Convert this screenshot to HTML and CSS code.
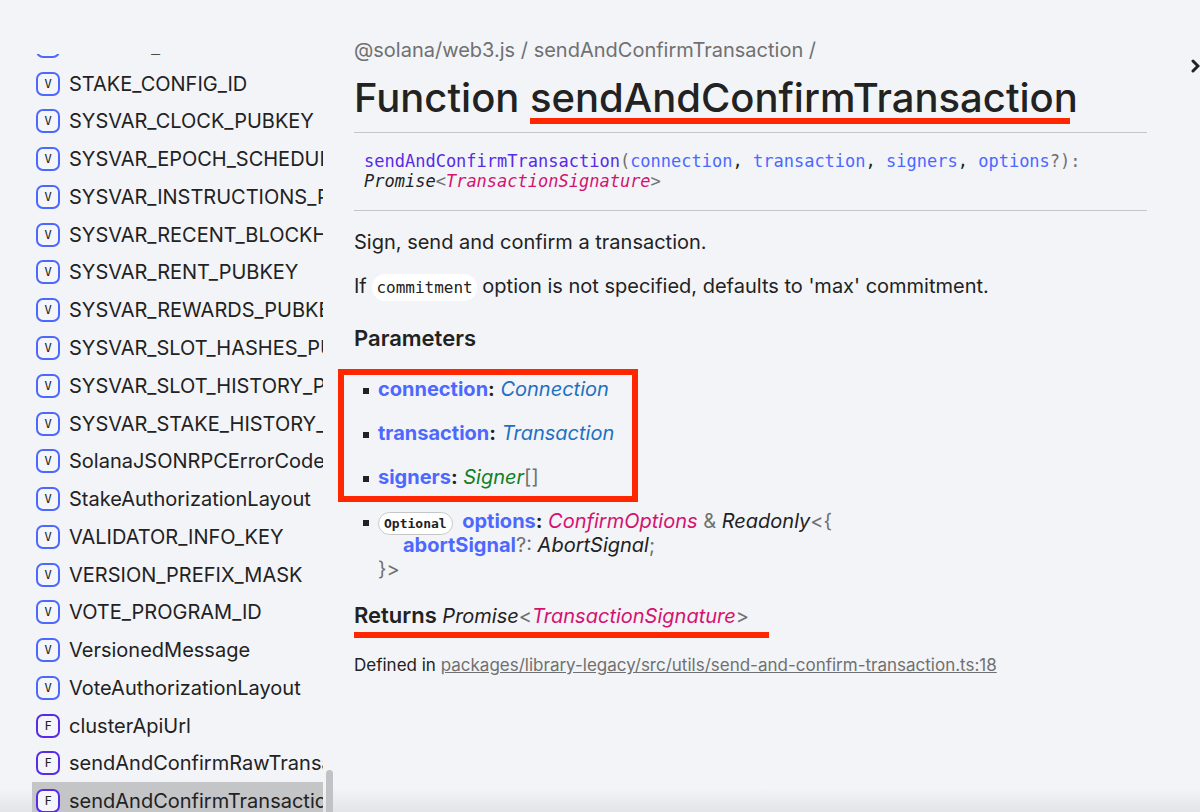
FILE: index.html
```html
<!DOCTYPE html>
<html lang="en">
<head>
    <meta charset="UTF-8">
    <meta name="viewport" content="width=device-width, initial-scale=1.0">
    <title>sendAndConfirmTransaction | @solana/web3.js</title>
    <link rel="stylesheet" href="styles.css">
</head>
<body>

    <div class="container">
        <nav class="site-menu">
            <ul class="nav-list">
                <li><a href="#"><span class="kind">V</span>SOLANA_SCHEMA</a></li>
                <li><a href="#"><span class="kind">V</span>STAKE_CONFIG_ID</a></li>
                <li><a href="#"><span class="kind">V</span>SYSVAR_CLOCK_PUBKEY</a></li>
                <li><a href="#"><span class="kind">V</span>SYSVAR_EPOCH_SCHEDULE_PUBKEY</a></li>
                <li><a href="#"><span class="kind">V</span>SYSVAR_INSTRUCTIONS_PUBKEY</a></li>
                <li><a href="#"><span class="kind">V</span>SYSVAR_RECENT_BLOCKHASHES_PUBKEY</a></li>
                <li><a href="#"><span class="kind">V</span>SYSVAR_RENT_PUBKEY</a></li>
                <li><a href="#"><span class="kind">V</span>SYSVAR_REWARDS_PUBKEY</a></li>
                <li><a href="#"><span class="kind">V</span>SYSVAR_SLOT_HASHES_PUBKEY</a></li>
                <li><a href="#"><span class="kind">V</span>SYSVAR_SLOT_HISTORY_PUBKEY</a></li>
                <li><a href="#"><span class="kind">V</span>SYSVAR_STAKE_HISTORY_PUBKEY</a></li>
                <li><a href="#"><span class="kind">V</span>SolanaJSONRPCErrorCode</a></li>
                <li><a href="#"><span class="kind">V</span>StakeAuthorizationLayout</a></li>
                <li><a href="#"><span class="kind">V</span>VALIDATOR_INFO_KEY</a></li>
                <li><a href="#"><span class="kind">V</span>VERSION_PREFIX_MASK</a></li>
                <li><a href="#"><span class="kind">V</span>VOTE_PROGRAM_ID</a></li>
                <li><a href="#"><span class="kind">V</span>VersionedMessage</a></li>
                <li><a href="#"><span class="kind">V</span>VoteAuthorizationLayout</a></li>
                <li><a href="#"><span class="kind kind-function">F</span>clusterApiUrl</a></li>
                <li><a href="#"><span class="kind kind-function">F</span>sendAndConfirmRawTransaction</a></li>
                <li><a href="#" class="current"><span class="kind kind-function">F</span>sendAndConfirmTransaction</a></li>
            </ul>
            <div class="scroll-thumb"></div>
        </nav>

        <main class="content">
            <div class="breadcrumb"><a href="#">@solana/web3.js</a> / <a href="#">sendAndConfirmTransaction</a> /</div>
            <h1>Function <span class="marked">sendAndConfirmTransaction</span></h1>

            <div class="signature">
                <span class="fn">sendAndConfirmTransaction</span><span class="symbol">(</span><span class="param">connection</span>, <span class="param">transaction</span>, <span class="param">signers</span>, <span class="param">options</span><span class="symbol">?):</span><br>
                <i>Promise</i><span class="symbol">&lt;</span><a href="#" class="type-alias">TransactionSignature</a><span class="symbol">&gt;</span>
            </div>

            <p>Sign, send and confirm a transaction.</p>
            <p>If <code>commitment</code> option is not specified, defaults to 'max' commitment.</p>

            <h4>Parameters</h4>
            <ul class="params boxed">
                <li><b><span class="param">connection</span>:</b> <a href="#" class="type-class">Connection</a></li>
                <li><b><span class="param">transaction</span>:</b> <a href="#" class="type-class">Transaction</a></li>
                <li><b><span class="param">signers</span>:</b> <a href="#" class="type-interface">Signer</a><span class="symbol">[]</span></li>
            </ul>
            <ul class="params">
                <li>
                    <code class="flag">Optional</code> <b><span class="param">options</span>:</b> <a href="#" class="type-alias">ConfirmOptions</a><span class="symbol"> &amp; </span><i>Readonly</i><span class="symbol">&lt;{</span>
                    <div class="nested"><b class="param">abortSignal</b><span class="symbol">?: </span><i>AbortSignal</i><span class="symbol">;</span></div>
                    <span class="symbol">}&gt;</span>
                </li>
            </ul>

            <h4 class="returns">Returns <span class="return-type"><i>Promise</i><span class="symbol">&lt;</span><a href="#" class="type-alias">TransactionSignature</a><span class="symbol">&gt;</span></span></h4>

            <p class="sources">Defined in <a href="#">packages/library-legacy/src/utils/send-and-confirm-transaction.ts:18</a></p>
        </main>

        <button class="expand" aria-label="Expand">
            <svg width="10" height="16" viewBox="0 0 10 16"><path d="M3 3l5 5-5 5" fill="none" stroke="#222" stroke-width="3" stroke-linecap="round"/></svg>
        </button>
    </div>

</body>
</html>
```

FILE: styles.css
```css
*, *::before, *::after {
    box-sizing: border-box;
}

body {
    margin: 0;
    height: 100vh;
    overflow: hidden;
    font-family: Inter, "Liberation Sans", sans-serif;
    font-size: 20px;
    line-height: 24px;
    color: #222;
    background: linear-gradient(to top, #e3e4e7, #f2f4f8 24px);
}

a {
    color: inherit;
    text-decoration: none;
}

ul {
    list-style: none;
    margin: 0;
    padding: 0;
}

.container {
    display: flex;
    height: 100%;
}

/* sidebar */
.site-menu {
    display: flex;
    flex: 0 0 302px;
    margin: 54px 0 0 32px;
    gap: 3px;
    overflow: hidden;
}

/* the list is scrolled, its first row is cut by the top edge */
.nav-list {
    display: flex;
    flex-direction: column;
    width: 291px;
    height: calc(100% + 35px);
    margin-top: -27px;
    overflow: hidden;
}

.nav-list li {
    flex: 1;
    display: flex;
}

.nav-list a {
    display: flex;
    align-items: center;
    gap: 9px;
    flex: 1;
    padding-left: 4px;
    white-space: nowrap;
}

.nav-list .current {
    background-color: #c4c5c7;
}

.kind {
    flex: none;
    width: 24px;
    height: 24px;
    border: 2px solid #4d68ff;
    border-radius: 7px;
    background-color: #f5f6fa;
    font-family: "DejaVu Sans Mono", monospace;
    font-size: 12px;
    line-height: 20px;
    text-align: center;
}

.kind-function {
    border-color: #572be7;
}

.scroll-thumb {
    align-self: flex-end;
    width: 7px;
    height: 42px;
    border-radius: 4px 4px 0 0;
    background-color: #c1c2c5;
}

/* main column */
.content {
    flex: 1;
    margin: 38px 32px 0 20px;
}

.breadcrumb {
    color: #707070;
}

h1 {
    margin: 12px 0 0;
    padding-bottom: 10px;
    border-bottom: 1px solid #c5c7c7;
    font-size: 40px;
    font-weight: 500;
    line-height: 48px;
}

.marked, .boxed, .returns {
    position: relative;
}

.marked::after, .returns::after {
    content: "";
    position: absolute;
    left: 0;
    right: 8px;
    bottom: -2px;
    height: 6px;
    background-color: #ff2600;
}

.signature {
    padding: 18px 10px 19px;
    margin-bottom: 19px;
    border-bottom: 1px solid #c5c7c7;
    font-family: "DejaVu Sans Mono", monospace;
    font-size: 17px;
    line-height: 20px;
}

p {
    margin: 0 0 20px;
}

code {
    padding: 4px;
    border-radius: 13px;
    background-color: #fff;
    font-family: "DejaVu Sans Mono", monospace;
    font-size: 16px;
    line-height: 20px;
}

h4 {
    margin: 28px 0 27px;
    font-size: 22px;
    font-weight: 600;
}

b {
    font-weight: 700;
}

.params li {
    position: relative;
    margin-bottom: 20px;
    padding-left: 24px;
}

.params li::before {
    content: "";
    position: absolute;
    left: 9px;
    top: 11px;
    width: 6px;
    height: 6px;
    background-color: #222;
}

.boxed::after {
    content: "";
    position: absolute;
    left: -16px;
    top: -8px;
    width: 300px;
    bottom: -13px;
    border: 6px solid #ff2600;
    pointer-events: none;
}

.flag {
    margin-right: 4px;
    padding: 3px 5px;
    border: 1px solid #c5c7c7;
    font-size: 13px;
    font-weight: bold;
    line-height: 16px;
}

.nested {
    padding-left: 25px;
}

.returns {
    width: fit-content;
    margin: 22px 0 25px;
}

.return-type {
    font-size: 20px;
    font-weight: 400;
}

.returns::after {
    right: -20px;
    bottom: -10px;
}

.sources {
    font-size: 17px;
}

.sources a {
    color: #707070;
    text-decoration: underline;
}

.fn {
    color: #572be7;
}

.param {
    color: #4d68ff;
}

.symbol {
    color: #707070;
}

.type-alias, .type-class, .type-interface {
    font-style: italic;
}

.type-alias {
    color: #d51270;
}

.type-class {
    color: #1f70c2;
}

.type-interface {
    color: #108024;
}

.expand {
    align-self: flex-start;
    flex: none;
    width: 21px;
    margin-top: 58px;
    padding: 0;
    border: none;
    background: none;
    text-align: right;
    line-height: 0;
}
```
